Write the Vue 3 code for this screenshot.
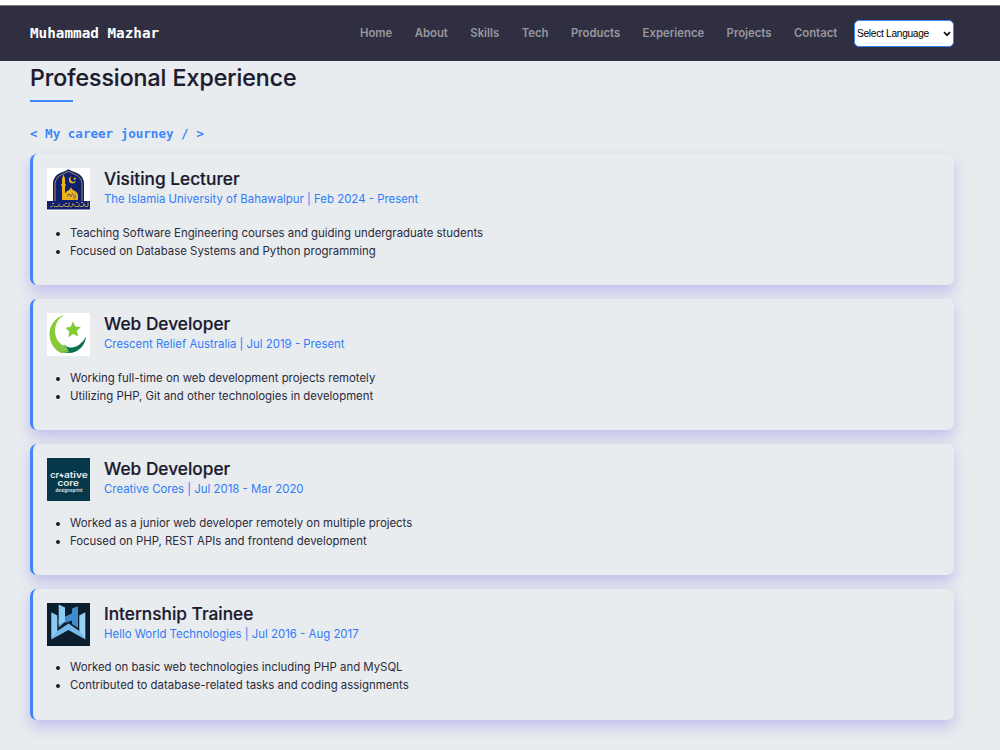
<script setup>
import { ref } from 'vue';

const links = ['Home', 'About', 'Skills', 'Tech', 'Products', 'Experience', 'Projects', 'Contact'];

const language = ref('');

const jobs = [
  {
    logo: 'university',
    title: 'Visiting Lecturer',
    company: 'The Islamia University of Bahawalpur | Feb 2024 - Present',
    points: [
      'Teaching Software Engineering courses and guiding undergraduate students',
      'Focused on Database Systems and Python programming',
    ],
  },
  {
    logo: 'crescent',
    title: 'Web Developer',
    company: 'Crescent Relief Australia | Jul 2019 - Present',
    points: [
      'Working full-time on web development projects remotely',
      'Utilizing PHP, Git and other technologies in development',
    ],
  },
  {
    logo: 'creative',
    title: 'Web Developer',
    company: 'Creative Cores | Jul 2018 - Mar 2020',
    points: [
      'Worked as a junior web developer remotely on multiple projects',
      'Focused on PHP, REST APIs and frontend development',
    ],
  },
  {
    logo: 'hello',
    title: 'Internship Trainee',
    company: 'Hello World Technologies | Jul 2016 - Aug 2017',
    points: [
      'Worked on basic web technologies including PHP and MySQL',
      'Contributed to database-related tasks and coding assignments',
    ],
  },
];
</script>

<template>
  <div class="page">
    <header class="navbar">
      <div class="brand">Muhammad Mazhar</div>
      <nav class="nav-links">
        <a v-for="link in links" :key="link" class="nav-link">{{ link }}</a>
      </nav>
      <div class="language">
        <select v-model="language" class="language-select">
          <option value="">Select Language</option>
        </select>
        <svg class="language-arrow" viewBox="0 0 8 6">
          <path d="m1 1.200 3 3 3-3" fill="none" stroke="#111" stroke-width="1.700" />
        </svg>
      </div>
    </header>

    <main class="experience">
      <h2 class="heading">Professional Experience</h2>
      <p class="tagline">&lt; My career journey / &gt;</p>

      <div class="jobs">
        <article v-for="job in jobs" :key="job.company" class="job">
          <div class="job-header">
            <svg v-if="job.logo === 'university'" class="logo" viewBox="0 0 43 43">
              <rect width="43" height="43" fill="#fff" />
              <path d="M6 34V15Q6.500 8 13 5Q18 3.500 21.500 1.200Q25 3.500 30 5Q36.500 8 37 15V34Z" fill="#10206f" />
              <path d="M8 33V15.500Q9 9 14.500 6.700Q18.500 5 21.500 3.300Q24.500 5 28.500 6.700Q34 9 35 15.500V33" fill="none" stroke="#b19b45" stroke-width=".9" />
              <path d="M15 32V18H14.300V16H15V10.500L16.500 6.500L18 10.500V16H18.700V18H18V32Z" fill="#eab31c" />
              <path d="M18 32V25.500Q19 23 22 22Q23.500 21 24 19Q24.500 21 26 22Q30.500 24 31 27V32Z" fill="#eab31c" />
              <path d="M20 29l2-3 2 3 1.500-4 2 4 1.500-2M20.500 26.500h3M26 30h3" fill="none" stroke="#344278" stroke-width=".6" />
              <path d="M24.500 8.300a3.600 3.600 0 1 0 4.500 4.200a3.100 3.100 0 1 1-4.500-4.200Z" fill="#eab31c" />
              <path d="m27.800 9 .5 1 1 .2-.8.7.2 1-.9-.5-1 .5.2-1-.8-.7 1.100-.2Z" fill="#eab31c" />
              <rect y="33" width="43" height="8.500" fill="#10206f" />
              <path d="M3 38.500q2 1 3-1l1 1h5v-3M13 38.500h3l1-2 1 2h4v-4M23 38.500q3 1 3-3l2 3h4v-3M33 38.500h3l1-3 1 3h3v-5M5 35.500h2M18 35.500h2M29 34.500h2M34 34.500h2" fill="none" stroke="#bda855" stroke-width=".9" />
            </svg>

            <svg v-else-if="job.logo === 'crescent'" class="logo" viewBox="0 0 43 43">
              <rect width="43" height="43" fill="#fff" />
              <path d="M18 2C8 4 2 13 2.500 22C3 31 8 37 14 40L21 34C13 33 8 26 8 18C8 11 11 5 18 2Z" fill="#86cb36" />
              <path d="M39 23.500C38 33 31 40 22 40C18 40 15 39 12.500 36.500L19 33C25 37 34 33 39 23.500Z" fill="#0b7050" />
              <path d="M11 35L18 31.500L22 38.500Q17 41 12.500 39Z" fill="#78be43" />
              <path d="m12 36 6-3m-4 5 6-3" stroke="#b4dc83" stroke-width=".7" />
              <path d="m26 8.500 2.300 5.100 5.600.3-4.100 3.900 1.500 5.600-5.100-2.500-5 3.300 1.200-5.800-4.100-3.700 5.500-1Z" fill="#80cb35" />
            </svg>

            <svg v-else-if="job.logo === 'creative'" class="logo" viewBox="0 0 43 43">
              <rect width="43" height="43" fill="#07384a" />
              <g class="logo-text">
                <text x="3.200" y="20" textLength="9" lengthAdjust="spacingAndGlyphs">cr</text>
                <path d="M12.500 17.500h4m-2.500-2 1.500 4" fill="none" stroke="#e8f0f2" stroke-width="1.300" />
                <text x="17" y="20" textLength="23.700" lengthAdjust="spacingAndGlyphs">ative</text>
                <text x="10.500" y="28" textLength="21.500" lengthAdjust="spacingAndGlyphs">core</text>
                <text class="logo-small" x="8.500" y="33.800" textLength="27">designsprint</text>
              </g>
            </svg>

            <svg v-else class="logo" viewBox="0 0 43 43">
              <rect width="43" height="43" fill="#0b1e2d" />
              <path d="M4.300 9.300L10.300 12.500V29L4.300 36.600Z" fill="#8dcaf2" />
              <path d="M38.300 9.300L32.300 12.500V29L38.300 36.600Z" fill="#9bd2f4" />
              <path d="M11.700 21.500V17L25 10.500V15.500L18 19L11.700 24.500Z" fill="#67ade1" />
              <path d="M11.700 1.500L18 4.500V18L11.700 21.500Z" fill="#8ecbf1" />
              <path d="M25 5.500L31 3.300V25L25 21V17.500L18 20V14L25 10.500Z" fill="#3f8ccc" />
              <path d="M4.300 36.600L10.300 28L21.500 20.500L32.300 28L38.300 36.600L21.500 27Z" fill="#75b9e9" />
            </svg>

            <div class="job-info">
              <h3 class="job-title">{{ job.title }}</h3>
              <p class="job-company">{{ job.company }}</p>
            </div>
          </div>
          <ul class="job-points">
            <li v-for="point in job.points" :key="point">{{ point }}</li>
          </ul>
        </article>
      </div>
    </main>
  </div>
</template>

<style>
body {
  margin: 0;
  background-color: #e8ecef;
}
</style>

<style scoped>
.page {
  box-sizing: border-box;
  height: 750px;
  overflow: hidden;
  border-top: 5px solid #fff;
  background-color: #e8ecef;
  color: #1b1a2e;
  font-family: Inter, sans-serif;
}

.navbar {
  box-sizing: border-box;
  height: 56px;
  display: flex;
  align-items: center;
  padding: 0 46px 0 30px;
  border-top: 1px solid #777c80;
  background-color: #302f41;
}

.brand {
  color: #fff;
  font-family: "DejaVu Sans Mono", monospace;
  font-size: 14.3px;
  font-weight: 700;
  line-height: 18px;
  padding-bottom: 1px;
}

.nav-links {
  display: flex;
  gap: 22.4px;
  margin-left: auto;
  padding-bottom: 2px;
}

.nav-link {
  color: #98979f;
  font-size: 11.35px;
  font-weight: 600;
  line-height: 18px;
}

.language {
  position: relative;
  width: 100px;
  height: 27px;
  margin-left: 16.7px;
}

.language-select {
  display: block;
  box-sizing: border-box;
  width: 100%;
  height: 100%;
  padding: 0 0 0 2px;
  appearance: none;
  border: 1px solid #3d86fb;
  border-radius: 5px;
  background-color: #fff;
  color: #000;
  font-family: "Liberation Sans", Arial, sans-serif;
  font-size: 10.2px;
  letter-spacing: -0.3px;
}

.language-arrow {
  position: absolute;
  top: 11px;
  right: 3px;
  width: 8px;
  height: 6px;
  pointer-events: none;
}

.experience {
  padding: 0 46px 0 30px;
}

.heading {
  margin: 0;
  padding-top: 1px;
  font-size: 23.1px;
  font-weight: 500;
  line-height: 33px;
  -webkit-text-stroke: 0.2px;
}

.heading::after {
  content: "";
  display: block;
  width: 43px;
  height: 2px;
  margin-top: 5px;
  background-color: #3d86fb;
}

.tagline {
  margin: 22px 0 10.2px;
  color: #3d86fb;
  font-family: "DejaVu Sans Mono", monospace;
  font-size: 12.55px;
  font-weight: 700;
  line-height: 20px;
}

.jobs {
  display: flex;
  flex-direction: column;
  gap: 13.9px;
}

.job {
  box-sizing: border-box;
  height: 131px;
  padding: 14px 14px 14px 13.5px;
  border-left: 3px solid #3d86fb;
  border-radius: 7px;
  background-color: #e8ecef;
  box-shadow: 0 7px 14px rgba(108, 92, 231, 0.3);
}

.job-header {
  display: flex;
  align-items: flex-start;
  gap: 14.5px;
}

.logo {
  width: 43px;
  height: 43px;
  flex-shrink: 0;
}

.logo-text {
  fill: #e8f0f2;
  font-size: 8.2px;
  font-weight: 600;
}

.logo-small {
  font-size: 4.2px;
}

.job-title {
  margin: 0;
  font-size: 17.3px;
  font-weight: 500;
  line-height: 21px;
  -webkit-text-stroke: 0.2px;
}

.job-company {
  margin: 0;
  color: #2f7bf7;
  font-size: 11.42px;
  line-height: 20px;
}

.job-points {
  margin: 12.55px 0 0;
  padding-left: 23.5px;
  color: #2b2a3b;
  font-size: 11.4px;
  line-height: 18px;
}

.job-points li::marker {
  color: #1b1a2e;
}
</style>
